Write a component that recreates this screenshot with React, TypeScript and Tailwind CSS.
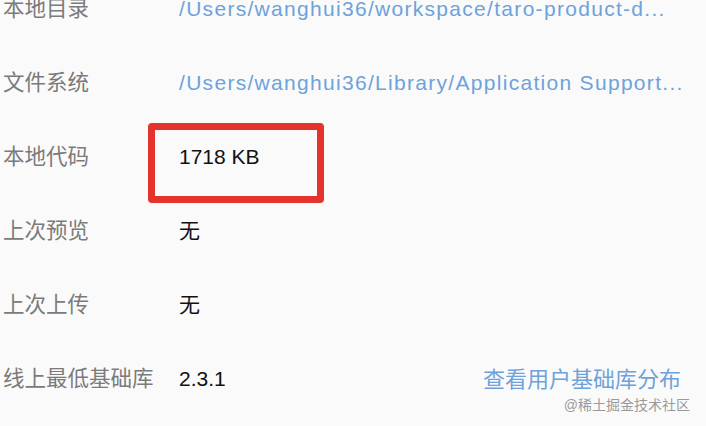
import React from "react";

const rows: { label: string; value: string; link?: boolean }[] = [
  { label: "本地目录", value: "/Users/wanghui36/workspace/taro-product-d...", link: true },
  { label: "文件系统", value: "/Users/wanghui36/Library/Application Support...", link: true },
  { label: "本地代码", value: "1718 KB" },
  { label: "上次预览", value: "无" },
  { label: "上次上传", value: "无" },
  { label: "线上最低基础库", value: "2.3.1" },
];

const App = () => {
  return (
    <div
      className="relative w-[706px] h-[426px] overflow-hidden bg-[#fafafa]"
      style={{ fontFamily: '"Liberation Sans", "Noto Sans CJK SC", sans-serif' }}
    >
      <div className="flex flex-col -mt-[28px] pl-[3px]">
        {rows.map((r) => (
          <div key={r.label} className="flex items-center h-[74px] whitespace-nowrap">
            <span className="w-[176px] text-[21.5px] text-[#7b7b7b]">{r.label}</span>
            <span
              className={
                r.link
                  ? "text-[21px] tracking-[1.3px] text-[#6ea2da]"
                  : "text-[21px] text-[#111]"
              }
            >
              {r.value}
            </span>
            {r.label === "线上最低基础库" && (
              <span className="ml-auto mr-[25px] text-[22px] text-[#6ea2da]">查看用户基础库分布</span>
            )}
          </div>
        ))}
      </div>

      {/* annotation */}
      <div className="absolute left-[148px] top-[123px] w-[176px] h-[80px] border-[7px] border-[#e3332a] rounded-[4px]" />

      <div className="absolute right-[16px] bottom-[10px] text-[14px] text-[#9a9a9a]">@稀土掘金技术社区</div>
    </div>
  );
};

export default App;
